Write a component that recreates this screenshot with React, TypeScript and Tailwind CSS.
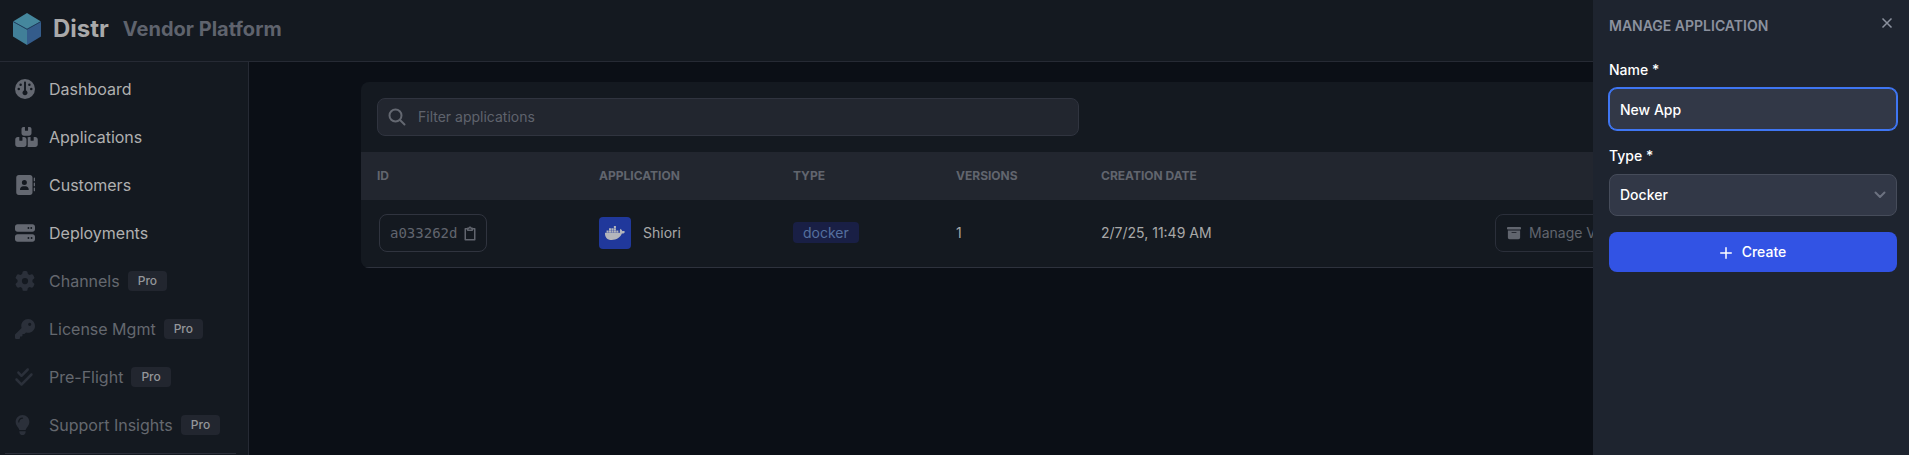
import type { ReactNode } from 'react';
import {
  FaAddressBook,
  FaBoxArchive,
  FaBoxesStacked,
  FaCheckDouble,
  FaDocker,
  FaGauge,
  FaGear,
  FaKey,
  FaLightbulb,
  FaServer,
} from 'react-icons/fa6';

type NavItem = { label: string; icon: ReactNode; pro?: boolean };

const navItems: NavItem[] = [
  { label: 'Dashboard', icon: <FaGauge className="size-5" /> },
  { label: 'Applications', icon: <FaBoxesStacked className="h-5 w-[23px] shrink-0" /> },
  { label: 'Customers', icon: <FaAddressBook className="size-5" /> },
  { label: 'Deployments', icon: <FaServer className="size-5" /> },
  { label: 'Channels', icon: <FaGear className="size-5" />, pro: true },
  { label: 'License Mgmt', icon: <FaKey className="size-5" />, pro: true },
  { label: 'Pre-Flight', icon: <FaCheckDouble className="h-5 w-[18px]" />, pro: true },
  { label: 'Support Insights', icon: <FaLightbulb className="h-5 w-[15px]" />, pro: true },
];

function Logo() {
  return (
    <svg viewBox="0 0 28 32" className="h-8 w-7" aria-hidden="true">
      <path d="M14 0 28 8.5 14 16.5 0 8.5Z" fill="#45879d" />
      <path d="M0 8.5 14 16.5V32L0 23.5Z" fill="#417f98" />
      <path d="M28 8.5 14 16.5V32l14-8.500Z" fill="#345c8b" />
      <path d="M0 8.500 14 16.200 28 8.500" fill="none" stroke="#1f3d5e" strokeWidth="1" />
    </svg>
  );
}

function Header() {
  return (
    <header className="flex h-[62px] items-center border-b border-[#262a34] bg-[#141920] pb-4 pl-[13px] pt-3">
      <Logo />
      <span className="ml-3 text-2xl font-bold text-[#a9a9aa]">Distr</span>
      <span className="ml-3.5 text-xl font-bold text-[#5f636d]">Vendor Platform</span>
    </header>
  );
}

function Sidebar() {
  return (
    <aside className="w-[249px] shrink-0 border-r border-[#262a34] bg-[#141920] pl-[5px] pr-3 pt-[7px]">
      <ul className="flex flex-col gap-2 border-b border-[#2b2f3a] pb-2">
        {navItems.map((item) => (
          <li key={item.label}>
            <a href="#" className="flex h-10 items-center px-2.5">
              <span className={item.pro ? 'flex w-5 text-[#2b303a]' : 'flex w-5 text-[#646871]'}>
                {item.icon}
              </span>
              <span className={item.pro ? 'ml-3.5 text-[#64686f]' : 'ml-3.5 text-[#b0b0b0]'}>
                {item.label}
              </span>
              {item.pro && (
                <span className="ml-2 rounded-sm bg-[#22262f] px-2.5 py-0.5 text-xs font-medium text-[#94969a]">
                  Pro
                </span>
              )}
            </a>
          </li>
        ))}
      </ul>
    </aside>
  );
}

function Applications() {
  return (
    <main className="min-w-0 flex-1 px-28 pt-5">
      <section className="overflow-hidden rounded-lg bg-[#141920]">
        <div className="p-4">
          <div className="flex h-[38px] w-1/2 items-center gap-3 rounded-lg border border-[#30343f] bg-[#22262f] px-2.5">
            <svg viewBox="0 0 18 18" className="size-[18px] text-[#646871]" aria-hidden="true">
              <circle cx="7.500" cy="7.500" r="6" fill="none" stroke="currentColor" strokeWidth="2" />
              <path d="m12 12 4.500 4.500" stroke="currentColor" strokeWidth="2" strokeLinecap="round" />
            </svg>
            <input
              type="text"
              aria-label="Filter applications"
              placeholder="Filter applications"
              className="min-w-0 flex-1 bg-transparent text-sm outline-none placeholder:text-[#5f636d]"
            />
          </div>
        </div>
        <table className="w-full table-fixed text-left text-sm text-[#a8a8a8]">
          <thead className="bg-[#22262f] text-xs uppercase text-[#61656e]">
            <tr className="h-12">
              <th className="w-[222px] px-4 font-bold">ID</th>
              <th className="w-[194px] px-4 font-bold">Application</th>
              <th className="w-[163px] px-4 font-bold">Type</th>
              <th className="w-[145px] px-4 font-bold">Versions</th>
              <th className="px-4 font-bold">Creation date</th>
              <th className="w-[318px] px-4" aria-label="Actions" />
            </tr>
          </thead>
          <tbody>
            <tr className="h-[67px] border-b border-[#2e323d]">
              <td className="px-4">
                <button
                  type="button"
                  className="ml-0.5 flex h-[38px] items-center gap-[7px] rounded-lg border border-[#30343f] px-2.5 text-[#61656e]"
                >
                  <code className="font-['DejaVu_Sans_Mono',monospace]">a033262d</code>
                  <svg viewBox="0 0 12 15" className="h-[15px] w-3" fill="none" stroke="currentColor" strokeWidth="1.500" strokeLinejoin="round" aria-hidden="true">
                    <path d="M3.500 2.750H1.250v11h9.500v-11H8.500" />
                    <path d="M3.750 4.250v-2h1.250l.5-1h1l.5 1h1.250v2Z" />
                  </svg>
                </button>
              </td>
              <td className="px-4">
                <div className="flex items-center gap-3">
                  <span className="flex size-8 items-center justify-center rounded-sm bg-[#20389b] text-[#b4b6bc]">
                    <FaDocker size={20} />
                  </span>
                  Shiori
                </div>
              </td>
              <td className="px-4">
                <span className="rounded-sm bg-[#191f45] px-2.5 py-0.5 text-[#556f9f]">docker</span>
              </td>
              <td className="px-4">1</td>
              <td className="px-4">2/7/25, 11:49 AM</td>
              <td className="px-4">
                <button
                  type="button"
                  className="flex h-[38px] items-center gap-2 whitespace-nowrap rounded-lg border border-[#2b2f3a] px-[11px] text-[#61656e]"
                >
                  <FaBoxArchive size={14} />
                  Manage Versions
                </button>
              </td>
            </tr>
          </tbody>
        </table>
      </section>
    </main>
  );
}

function Drawer() {
  return (
    <aside className="fixed inset-y-0 right-0 w-[316px] bg-[#1e242f] py-4 pl-4 pr-3 text-sm font-medium text-white">
      <div className="mb-6 flex items-start justify-between">
        <h2 className="font-semibold uppercase text-[#8b919e]">Manage Application</h2>
        <button type="button" aria-label="Close" className="px-1 py-px text-[#8b919e]">
          <svg viewBox="0 0 12 12" className="size-3" fill="none" stroke="currentColor" strokeWidth="1.500" aria-hidden="true">
            <path d="m1.500 1.500 9 9m0-9-9 9" />
          </svg>
        </button>
      </div>
      <form className="flex flex-col gap-4" onSubmit={(event) => event.preventDefault()}>
        <div className="flex flex-col gap-2">
          <label htmlFor="app-name">Name *</label>
          <input
            id="app-name"
            type="text"
            defaultValue="New App"
            className="h-[42px] rounded-lg border border-[#3f76f3] bg-[#323847] px-2.5 outline-none ring-1 ring-[#3f76f3]"
          />
        </div>
        <div className="flex flex-col gap-2">
          <label htmlFor="app-type">Type *</label>
          <div className="grid items-center">
            <select
              id="app-type"
              className="col-start-1 row-start-1 h-[42px] appearance-none rounded-lg border border-[#464c5a] bg-[#323847] px-2.5 outline-none"
            >
              <option>Docker</option>
            </select>
            <svg viewBox="0 0 12 8" className="pointer-events-none col-start-1 row-start-1 mr-[11px] h-2 w-3 justify-self-end" fill="none" stroke="#6c7280" strokeWidth="2" strokeLinecap="round" strokeLinejoin="round" aria-hidden="true">
              <path d="m1.500 1.500 4.500 4.500 4.500-4.500" />
            </svg>
          </div>
        </div>
        <button type="submit" className="flex h-10 items-center justify-center gap-2.5 rounded-lg bg-[#3253e4]">
          <svg viewBox="0 0 12 12" className="mt-0.5 size-3" stroke="currentColor" strokeWidth="1.500" strokeLinecap="round" aria-hidden="true">
            <path d="M6 .75v10.500M.75 6h10.500" />
          </svg>
          Create
        </button>
      </form>
    </aside>
  );
}

export default function App() {
  return (
    <div className="flex min-h-screen flex-col bg-[#0b0f16] font-['Inter',sans-serif]">
      <Header />
      <div className="flex flex-1">
        <Sidebar />
        <Applications />
      </div>
      <Drawer />
    </div>
  );
}
